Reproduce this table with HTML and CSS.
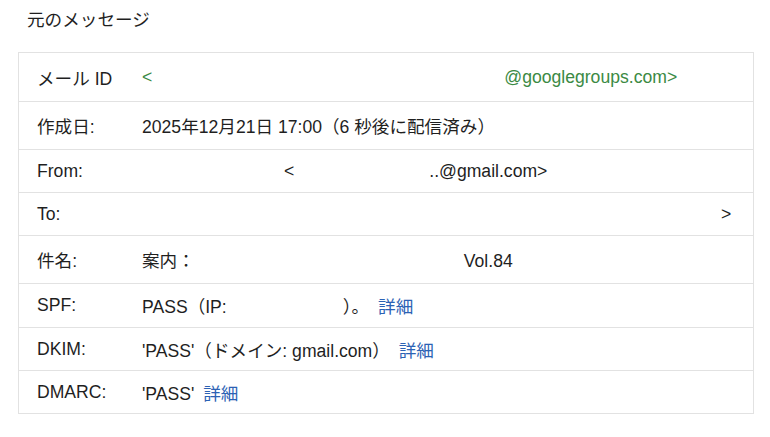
FILE: index.html
```html
<!DOCTYPE html>
<html lang="ja">
<head>
<meta charset="utf-8">
<title>元のメッセージ</title>
<link rel="stylesheet" href="styles.css">
</head>
<body>
<h1 class="title">元のメッセージ</h1>
<div class="table">
  <div class="row h49">
    <div class="label">メール ID</div>
    <div class="value green">&lt;<span class="gap" style="width:352px"></span>@googlegroups.com&gt;</div>
  </div>
  <div class="row h48">
    <div class="label">作成日:</div>
    <div class="value">2025年12月21日 17:00（6 秒後に配信済み）</div>
  </div>
  <div class="row h43">
    <div class="label">From:</div>
    <div class="value"><span class="gap" style="width:142px"></span>&lt;<span class="gap" style="width:135px"></span>..@gmail.com&gt;</div>
  </div>
  <div class="row h43">
    <div class="label">To:</div>
    <div class="value"><span class="gap" style="width:579px"></span>&gt;</div>
  </div>
  <div class="row h48">
    <div class="label">件名:</div>
    <div class="value">案内：<span class="gap" style="width:269px"></span>Vol.84</div>
  </div>
  <div class="row h44">
    <div class="label">SPF:</div>
    <div class="value">PASS（IP:<span class="gap" style="width:116px"></span>）。 <a class="link" href="#">詳細</a></div>
  </div>
  <div class="row h43">
    <div class="label">DKIM:</div>
    <div class="value">'PASS'（ドメイン: gmail.com） <a class="link" href="#">詳細</a></div>
  </div>
  <div class="row h43">
    <div class="label">DMARC:</div>
    <div class="value">'PASS' <a class="link" href="#">詳細</a></div>
  </div>
</div>
</body>
</html>
```

FILE: styles.css
```css
html, body {
  margin: 0;
  padding: 0;
  background: #ffffff;
}
body {
  padding: 8px 16px 0 18px;
  font-family: "Liberation Sans", Arial, "Noto Sans CJK JP", sans-serif;
  font-size: 17.6px;
  color: #1f1f1f;
}
.title {
  margin: 0 0 20px 9px;
  font-size: 17.6px;
  font-weight: normal;
  line-height: 24px;
  color: #1f1f1f;
}
.table {
  width: 736px;
  box-sizing: border-box;
  border: 1px solid #e2e2e2;
  border-bottom: none;
}
.row {
  display: grid;
  grid-template-columns: 105px 1fr;
  align-items: center;
  box-sizing: border-box;
  border-bottom: 1px solid #e2e2e2;
  padding-left: 18px;
}
.h49 { height: 49px; }
.h48 { height: 48px; }
.h44 { height: 44px; }
.h43 { height: 43px; }
.label {
  white-space: nowrap;
}
.value {
  white-space: nowrap;
}
.green {
  color: #3b8a44;
}
.gap {
  display: inline-block;
}
.link {
  margin-left: 4px;
  color: #2c62b4;
  text-decoration: none;
}
```
